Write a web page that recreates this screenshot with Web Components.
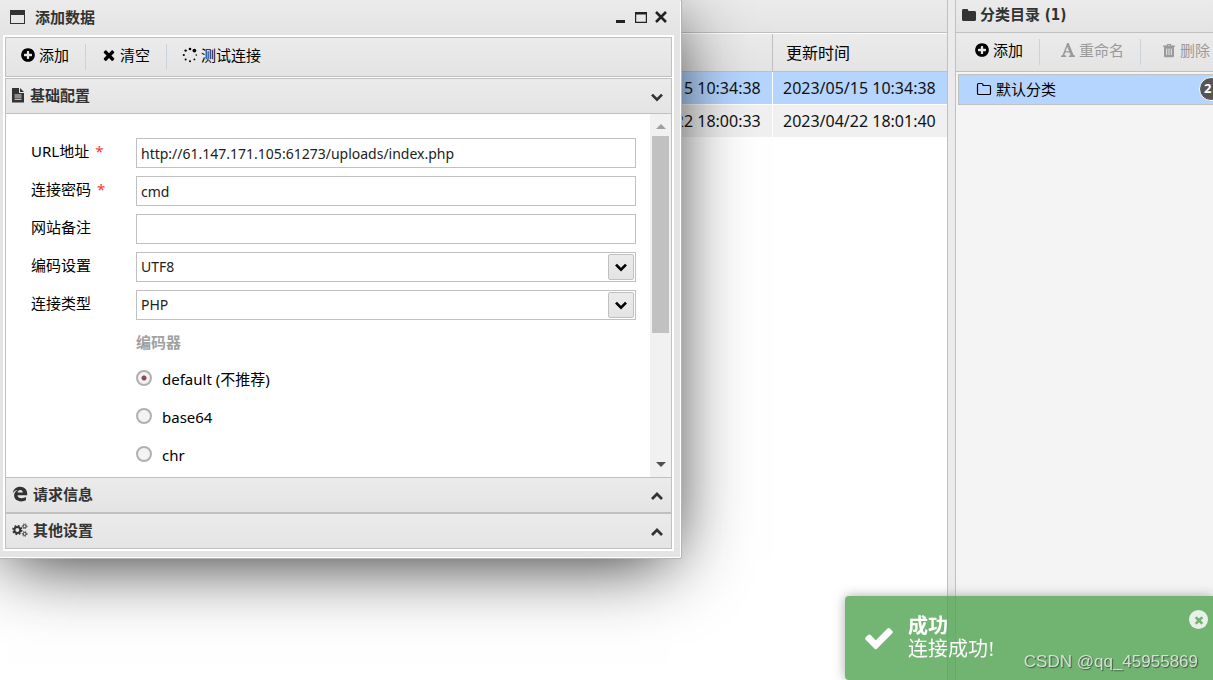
<!DOCTYPE html>
<html lang="zh-CN">
<head>
<meta charset="utf-8">
<title>添加数据</title>
<style>
html, body { height: 100%; margin: 0; overflow: hidden; }
body {
  --line: #c0c0c0;
  --face: linear-gradient(#ebebeb, #e4e4e4);
  --pick: #b5d5ff;
  font: 15px/20px "Noto Sans", "Noto Sans CJK SC", sans-serif;
  color: #000;
  background: #fff;
}
</style>
</head>
<body>
<app-shell>
  <data-grid slot="main"></data-grid>
  <side-pane slot="side" heading="分类目录 (1)"></side-pane>
  <modal-window slot="over" heading="添加数据">
    <tool-bar slot="tools">
      <tool-button icon="plus">添加</tool-button>
      <tool-button icon="times">清空</tool-button>
      <tool-button icon="spinner">测试连接</tool-button>
    </tool-bar>
    <fold-panel heading="基础配置" icon="doc" open>
      <form-field label="URL地址" required value="http://61.147.171.105:61273/uploads/index.php"></form-field>
      <form-field label="连接密码" required value="cmd"></form-field>
      <form-field label="网站备注" value=""></form-field>
      <form-field label="编码设置" kind="select" value="UTF8"></form-field>
      <form-field label="连接类型" kind="select" value="PHP"></form-field>
      <encoder-list></encoder-list>
    </fold-panel>
    <fold-panel heading="请求信息" icon="edge"></fold-panel>
    <fold-panel heading="其他设置" icon="gears"></fold-panel>
  </modal-window>
  <toast-note slot="over" heading="成功">连接成功!</toast-note>
  <water-mark slot="over">CSDN @qq_45955869</water-mark>
</app-shell>

<script>
const ICONS = {
  plus: ['0 0 1792 1792', '<path d="M1344 960v-128q0-26-19-45t-45-19h-256v-256q0-26-19-45t-45-19h-128q-26 0-45 19t-19 45v256h-256q-26 0-45 19t-19 45v128q0 26 19 45t45 19h256v256q0 26 19 45t45 19h128q26 0 45-19t19-45v-256h256q26 0 45-19t19-45zm320-64q0 209-103 385.5t-279.5 279.5-385.5 103-385.5-103-279.5-279.5-103-385.5 103-385.5 279.5-279.5 385.5-103 385.5 103 279.5 279.5 103 385.5z"/>'],
  times: ['0 0 1792 1792', '<path d="M1490 1322q0 40-28 68l-136 136q-28 28-68 28t-68-28l-294-294-294 294q-28 28-68 28t-68-28l-136-136q-28-28-28-68t28-68l294-294-294-294q-28-28-28-68t28-68l136-136q28-28 68-28t68 28l294 294 294-294q28-28 68-28t68 28l136 136q28 28 28 68t-28 68l-294 294 294 294q28 28 28 68z"/>'],
  check: ['0 0 1792 1792', '<path d="M1671 566q0 40-28 68l-724 724-136 136q-28 28-68 28t-68-28l-136-136-362-362q-28-28-28-68t28-68l136-136q28-28 68-28t68 28l294 295 656-657q28-28 68-28t68 28l136 136q28 28 28 68z"/>'],
  spinner: ['0 0 16 16', '<circle cx="8" cy="2" r="1.3"/><circle cx="12.4" cy="3.6" r="1.9"/><circle cx="14.3" cy="8" r=".8"/><circle cx="12.4" cy="12.4" r=".9"/><circle cx="8" cy="14.2" r="1"/><circle cx="3.6" cy="12.4" r="1"/><circle cx="1.8" cy="8" r="1.1"/><circle cx="3.6" cy="3.6" r="1.2"/>'],
  window: ['0 0 16 16', '<path fill-rule="evenodd" d="M0 1h15v14H0zM1 6v8h13V6z"/>'],
  minimize: ['0 0 16 16', '<path d="M3 11h9v3H3z"/>'],
  maximize: ['0 0 16 16', '<path fill-rule="evenodd" d="M2 3h12v11H2zM3.200 5.500v7.300h9.600V5.500z"/>'],
  close: ['0 0 16 16', '<path d="M3 3l10 10M13 3L3 13" fill="none" stroke="currentColor" stroke-width="2.600"/>'],
  down: ['0 0 16 16', '<path d="M3 5.600l5 5 5-5" fill="none" stroke="currentColor" stroke-width="2.700"/>'],
  up: ['0 0 16 16', '<path d="M3 11l5-5 5 5" fill="none" stroke="currentColor" stroke-width="2.700"/>'],
  doc: ['2 0 13 16', '<path fill-rule="evenodd" d="M2 1h7v5h5v9.500H2zM10 1l4 4h-4zM4.500 7.500v1h7v-1zM4.500 9.600v1h7v-1zM4.500 11.700v1h7v-1z"/>'],
  edge: ['0 0 16 16', '<path d="M.8 7.300C1.300 3.400 4.300.8 8 .8c4.500 0 7.200 3 7.200 7v1.500H5.500c.1 2 1.900 3 4.200 3 1.500 0 3-.5 4.300-1.200v3.200c-1.400.7-3 1.100-4.900 1.100-4.200 0-7-2.400-7-5.800 0-2.500 1.300-4.500 3.700-5.500C3.400 4.300 1.800 5.500.8 7.300zM5.600 6.600h5.200c0-1.700-1-2.700-2.500-2.700s-2.500 1-2.700 2.700z"/>'],
  gears: ['0 0 18 16', '<g fill="none" stroke="currentColor"><circle cx="6" cy="8" r="3.300" stroke-width="2.200"/><circle cx="6" cy="8" r="5" stroke-width="1.600" stroke-dasharray="2 1.930"/><circle cx="14.200" cy="3.800" r="1.700" stroke-width="1.100"/><circle cx="14.200" cy="3.800" r="2.700" stroke-width="1" stroke-dasharray="1.300 1.120"/><circle cx="14.200" cy="12.400" r="1.700" stroke-width="1.100"/><circle cx="14.200" cy="12.400" r="2.700" stroke-width="1" stroke-dasharray="1.300 1.120"/></g>'],
  folder: ['0 0 16 16', '<path d="M1 3.500C1 2.600 1.600 2 2.500 2h3.300c.9 0 1.500.6 1.500 1.500V4h6.200c.9 0 1.500.6 1.500 1.500v7c0 .9-.6 1.500-1.500 1.500h-11C1.600 14 1 13.400 1 12.500z"/>'],
  folderOpen: ['0 0 16 16', '<path d="M1.500 3.800c0-.8.500-1.300 1.300-1.300h2.900c.8 0 1.300.5 1.300 1.300v.7h6.200c.8 0 1.300.5 1.300 1.300v6.400c0 .8-.5 1.300-1.300 1.300H2.800c-.8 0-1.300-.5-1.300-1.300z" fill="none" stroke="currentColor" stroke-width="1.200"/>'],
  letter: ['0 0 16 16', '<path fill-rule="evenodd" d="M7.200 1h1.500l4.800 12 1.500.6V15H8.800v-1.300l1.800-.5-1-2.700H5.200l-.9 2.600 1.900.6V15H1v-1.300l1.600-.7zM7.300 4.700L5.600 9.300h3.500z"/>'],
  trash: ['0 0 16 16', '<path fill-rule="evenodd" d="M2 3.500h3.500L6 2h4l.5 1.500H14v1.200h-1V14c0 .8-.5 1.300-1.200 1.300H4.200C3.500 15.300 3 14.800 3 14V4.700H2zM6.600 3.500h2.800l-.2-.6H6.800zM5.200 6.500v6.500h1V6.500zM7.500 6.500v6.500h1V6.500zM9.800 6.500v6.500h1V6.500z"/>']
};

class Base extends HTMLElement {
  connectedCallback() {
    if (this.shadowRoot) return;
    this.attachShadow({ mode: 'open' }).innerHTML = this.render();
  }
  at(name) { return this.getAttribute(name) || ''; }
}
const define = (tag, cls) => customElements.define(tag, cls);

define('ui-icon', class extends Base {
  render() {
    const [box, body] = ICONS[this.at('name')];
    return `<style>:host{display:block;flex:none;width:16px;height:16px}:host([name=doc]){width:13px}svg{display:block;width:100%;height:100%}</style>
      <svg viewBox="${box}" fill="currentColor" aria-hidden="true">${body}</svg>`;
  }
});

define('app-shell', class extends Base {
  render() {
    return `<style>
      :host{display:grid;grid-template-columns:minmax(0,1fr) 258px;column-gap:7px;height:100%;background:#ebebeb}
      ::slotted([slot=main]){border-right:1px solid var(--line)}
      ::slotted([slot=side]){border-left:1px solid var(--line)}
    </style><slot name="main"></slot><slot name="side"></slot><slot name="over"></slot>`;
  }
});

define('data-grid', class extends Base {
  render() {
    const rows = [
      ['2023/05/15 10:34:38', '2023/05/15 10:34:38', 'on'],
      ['2023/04/22 18:00:33', '2023/04/22 18:01:40', '']
    ];
    return `<style>
      :host{display:block;background:#fff;font-size:16px;overflow:hidden}
      .cap{box-sizing:border-box;height:33px;background:var(--face);border-bottom:1px solid var(--line)}
      table{width:100%;border-collapse:separate;border-spacing:0;margin-top:1px;table-layout:fixed}
      th,td{box-sizing:border-box;text-align:left;font-weight:400;white-space:nowrap;padding:0 10px}
      th{height:38px;padding:0 13px;background:var(--face);border-bottom:1px solid var(--line)}
      th+th{border-left:1px solid var(--line)}
      td{height:33px;border-bottom:1px solid #fff;background:#f0f0f0;color:#111}
      td+td{border-left:1px solid #fff}
      .on td{background:var(--pick)}
      .t{width:175px}
    </style>
    <div class="cap"></div>
    <table><thead><tr><th></th><th class="t"></th><th class="t">更新时间</th></tr></thead>
    <tbody>${rows.map(r => `<tr class="${r[2]}"><td></td><td>${r[0]}</td><td>${r[1]}</td></tr>`).join('')}</tbody></table>`;
  }
});

define('tool-button', class extends Base {
  render() {
    return `<style>
      :host{display:flex;flex:none}
      button{display:flex;align-items:center;gap:3px;box-sizing:border-box;height:26px;padding:0 0 4px;border:0;background:none;font:inherit;color:inherit;white-space:nowrap}
      button:disabled{color:#9a9a9a}
    </style><button type="button" ${this.hasAttribute('disabled') ? 'disabled' : ''}><ui-icon name="${this.at('icon')}"></ui-icon><slot></slot></button>`;
  }
});

define('tool-bar', class extends Base {
  render() {
    return `<style>
      :host{display:flex;align-items:center;box-sizing:border-box;height:40px;padding-left:14px;background:var(--face);border:1px solid var(--line);overflow:hidden}
      ::slotted(*){padding-right:16px;margin-right:15px;border-right:1px solid #c8d3dc}
      ::slotted(:last-child){border-right-color:transparent}
    </style><slot></slot>`;
  }
});

define('side-pane', class extends Base {
  render() {
    return `<style>
      :host{display:block;background:#f4f4f4;overflow:hidden}
      header{display:flex;align-items:center;gap:3px;box-sizing:border-box;height:33px;padding:0 0 3px 5px;background:var(--face);border-bottom:1px solid var(--line);color:#333}
      h2{margin:0;font:bold 15px/20px "DejaVu Sans Condensed","Noto Sans CJK SC",sans-serif}
      nav{display:flex;align-items:center;box-sizing:border-box;height:39px;padding-left:18px;background:var(--face);border-bottom:1px solid var(--line)}
      tool-button{padding-right:16px;margin-right:20px;border-right:1px solid #c8d3dc}
      tool-button:last-child{border:0}
      ul{list-style:none;margin:2px 0 0 2px;padding:0}
      li{display:flex;align-items:center;box-sizing:border-box;height:31px;margin-right:-11px;padding:0 0 1px 17px;gap:4px;background:var(--pick);border:1px solid var(--line)}
      .n{box-sizing:border-box;width:24px;height:24px;margin-left:auto;padding-left:4px;border:1px solid #fff;border-radius:12px;background:#555;color:#fff;font-weight:700;font-size:13px;line-height:21px}
    </style>
    <header><ui-icon name="folder"></ui-icon><h2>${this.at('heading')}</h2></header>
    <nav><tool-button icon="plus">添加</tool-button><tool-button icon="letter" disabled>重命名</tool-button><tool-button icon="trash" disabled>删除</tool-button></nav>
    <ul><li><ui-icon name="folderOpen"></ui-icon><span>默认分类</span><span class="n">2</span></li></ul>`;
  }
});

define('modal-window', class extends Base {
  render() {
    return `<style>
      :host{position:absolute;left:-5px;top:-1px;box-sizing:border-box;width:687px;max-width:100%;padding:0 7px 7px;background:#e4e4e4;
        border:1px solid #b4b4b4;box-shadow:inset 0 0 0 1px #fff,0 12px 70px -12px rgba(0,0,0,.9);border-radius:2px}
      header{display:flex;align-items:center;gap:9px;box-sizing:border-box;height:35px;margin:0 -6px;padding:0 11px 2px 13px;color:#333;background:linear-gradient(#ebebeb,#e4e4e4)}
      h1{flex:1;margin:0;font:bold 15px/20px "Noto Sans","Noto Sans CJK SC",sans-serif}
      .b{display:flex;gap:4px}
      button{padding:0;border:0;background:none;color:#222}
      .in{padding:2px;background:#fff}
      .p{margin-top:1px}
    </style>
    <header><ui-icon name="window"></ui-icon><h1>${this.at('heading')}</h1>
      <div class="b"><button type="button" aria-label="最小化"><ui-icon name="minimize"></ui-icon></button><button type="button" aria-label="最大化"><ui-icon name="maximize"></ui-icon></button><button type="button" aria-label="关闭"><ui-icon name="close"></ui-icon></button></div></header>
    <div class="in"><slot name="tools"></slot><div class="p"><slot></slot></div></div>`;
  }
});

define('fold-panel', class extends Base {
  render() {
    const open = this.hasAttribute('open');
    return `<style>
      :host{display:block}
      button{display:flex;align-items:center;gap:5px;box-sizing:border-box;width:100%;height:36px;padding:0 6px 2px;border:1px solid var(--line);background:var(--face);color:#333;font:bold 15px/20px "Noto Sans","Noto Sans CJK SC",sans-serif;text-align:left}
      button span{flex:1}
      .chev{padding-top:3px}
      .body{display:flex;height:363px;overflow:hidden;border:solid var(--line);border-width:0 1px}
      .form{flex:1;min-width:0;padding:24px 14px 0 25px}
      .bar{display:flex;flex-direction:column;align-items:center;flex:none;box-sizing:border-box;width:21px;padding:10px 0 10px;background:#f1f1f1}
      .bar i{width:0;border:solid transparent;border-width:0 5px 5px;border-bottom-color:#a0a0a0}
      .bar b{width:17px;height:197px;margin:7px 0 auto;background:#c1c1c1}
      .bar i.d{border-width:5px 5px 0;border-top-color:#505050}
    </style>
    <button type="button" aria-expanded="${open}"><ui-icon name="${this.at('icon')}"></ui-icon><span>${this.at('heading')}</span><ui-icon class="chev" name="${open ? 'down' : 'up'}"></ui-icon></button>
    ${open ? '<div class="body"><div class="form"><slot></slot></div><div class="bar"><i></i><b></b><i class="d"></i></div></div>' : ''}`;
  }
});

define('form-field', class extends Base {
  render() {
    const v = this.at('value');
    const ctl = this.at('kind') === 'select'
      ? `<select id="c"><option>${v}</option></select><span class="arr"><ui-icon name="down"></ui-icon></span>`
      : `<input id="c" type="text" value="${v}">`;
    return `<style>
      :host{display:grid;grid-template-columns:105px minmax(0,1fr);margin-bottom:8px}
      label{line-height:26px;white-space:nowrap;font-size:15px}
      em{font-style:normal;color:#f33;margin-left:6px}
      .c{position:relative;display:flex}
      input,select{appearance:none;box-sizing:border-box;width:100%;height:30px;margin:0;padding:0 4px;border:1px solid var(--line);border-radius:0;background:#fff;font:inherit;font-size:14px;color:#222;outline:0}
      .arr{position:absolute;right:2px;top:2px;display:grid;place-items:center;box-sizing:border-box;width:26px;height:26px;border:1px solid var(--line);border-radius:2px;background:var(--face);pointer-events:none}
    </style><label for="c">${this.at('label')}${this.hasAttribute('required') ? '<em>*</em>' : ''}</label><div class="c">${ctl}</div>`;
  }
});

define('encoder-list', class extends Base {
  render() {
    const opts = ['default (不推荐)', 'base64', 'chr'];
    return `<style>
      :host{display:block;margin-left:105px}
      fieldset{margin:0;padding:0;border:0}
      legend{padding:0;margin-bottom:9px;line-height:28px;font-weight:700;color:#a0a0a0}
      label{display:flex;align-items:center;gap:10px;height:28px;margin-bottom:10px}
      input{appearance:none;box-sizing:border-box;width:16px;height:16px;margin:0 0 2px;border:2px solid #b3afb1;border-radius:8px;background:#f3f3f3}
      input:checked{background:radial-gradient(circle,#8c4a4a 2px,#f3f3f6 3px)}
    </style><fieldset><legend>编码器</legend>${opts.map((o, i) => `<label><input type="radio" name="enc" ${i ? '' : 'checked'}>${o}</label>`).join('')}</fieldset>`;
  }
});

define('toast-note', class extends Base {
  render() {
    return `<style>
      :host{position:fixed;right:0;bottom:0;display:flex;align-items:center;gap:13px;box-sizing:border-box;width:368px;height:84px;padding:0 5px 0 18px;border-radius:4px 0 0 4px;
        background:#51a351;box-shadow:0 0 12px #999;opacity:.8;color:#fff;font:20px/23px "Liberation Serif","Noto Sans CJK SC",serif}
      .t{flex:1}
      strong{display:block}
      .k{width:32px;height:32px}
      button{align-self:flex-start;display:grid;place-items:center;width:19px;height:19px;margin-top:14px;padding:0;border:0;border-radius:10px;background:rgba(255,255,255,.85);color:#51a351}
      button ui-icon{width:12px;height:12px}
    </style><ui-icon class="k" name="check"></ui-icon><div class="t"><strong>${this.at('heading')}</strong><slot></slot></div>
    <button type="button" aria-label="关闭"><ui-icon name="times"></ui-icon></button>`;
  }
});

define('water-mark', class extends Base {
  render() {
    return `<style>:host{position:fixed;right:15px;bottom:8px;font:17px/20px "Liberation Sans",sans-serif;color:#d6dfd6;text-shadow:1px 1px 1px #3c5c3c;white-space:nowrap;pointer-events:none}</style><slot></slot>`;
  }
});
</script>
</body>
</html>
